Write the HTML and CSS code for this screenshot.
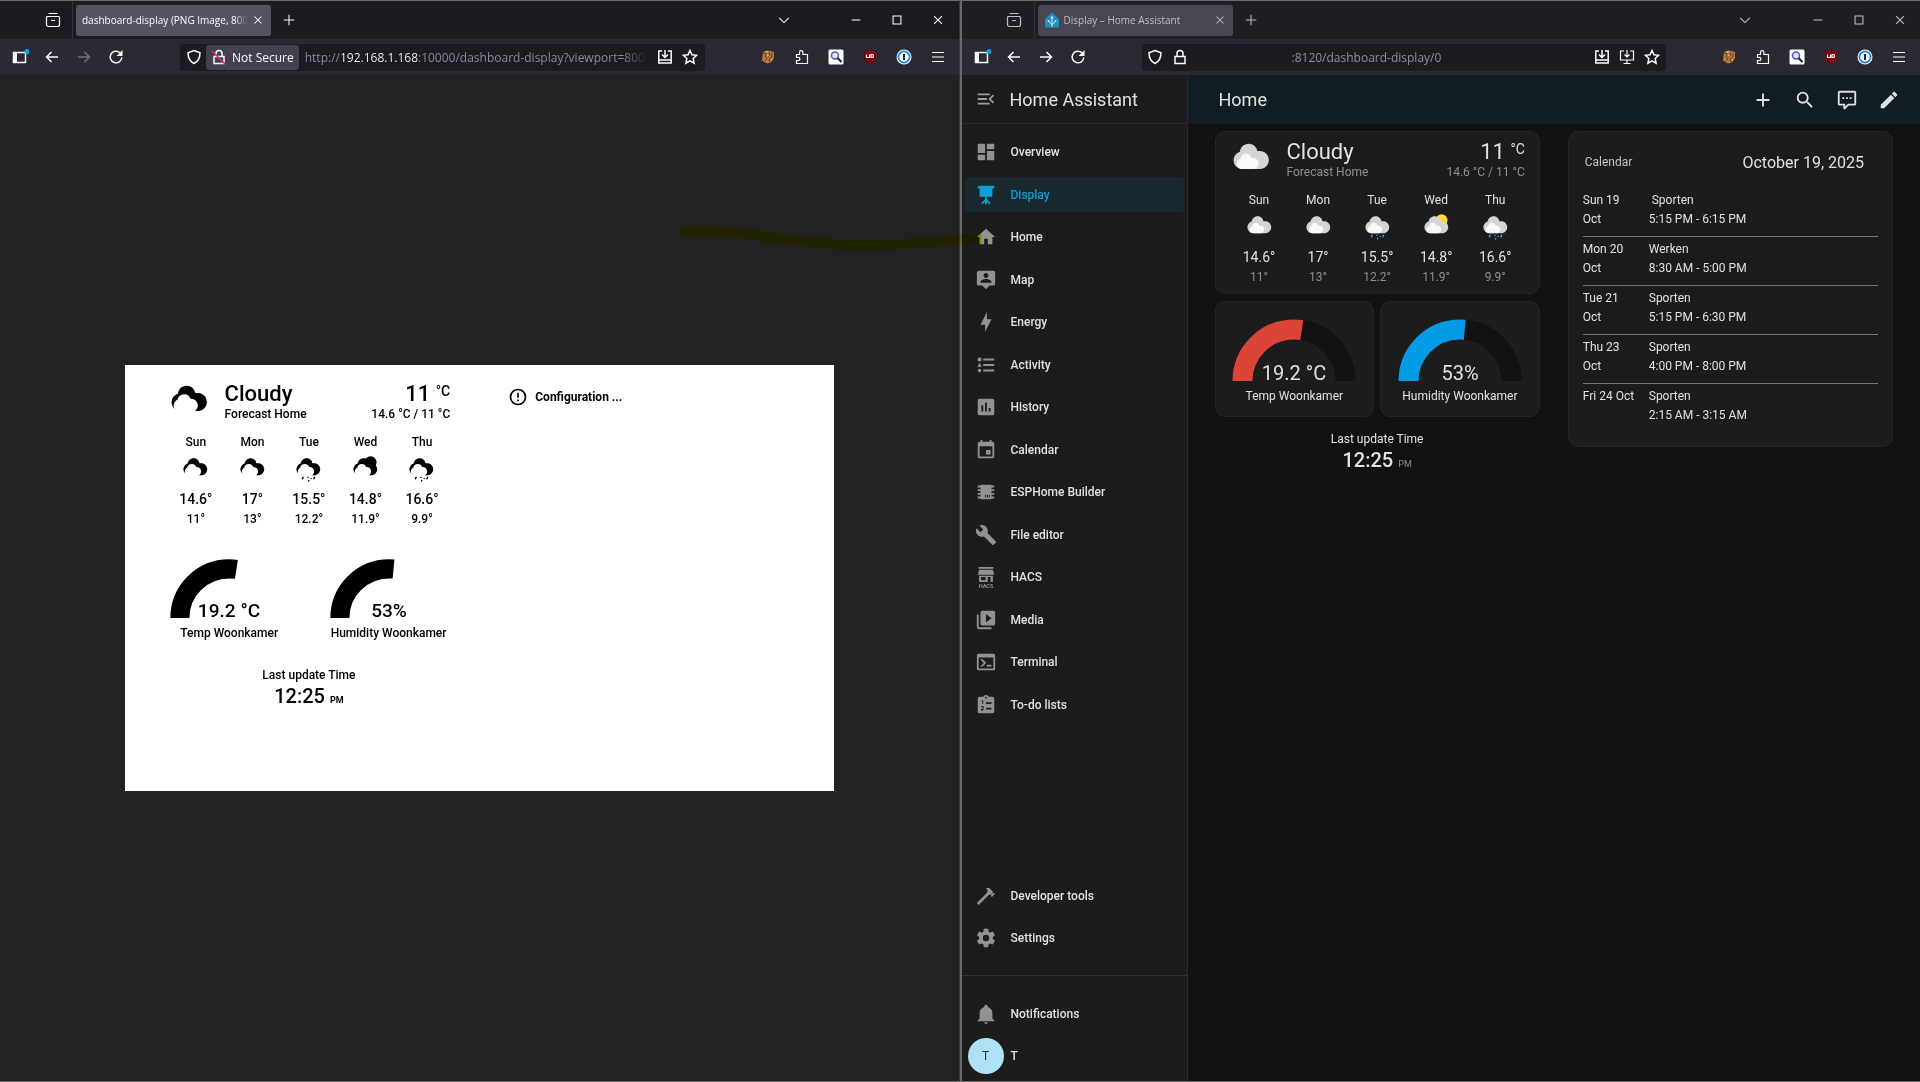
FILE: index.html
```html
<!DOCTYPE html>
<html lang="en">
<head>
    <meta charset="UTF-8">
    <meta name="viewport" content="width=device-width, initial-scale=1.0">
    <title>Display – Home Assistant</title>
    <link rel="stylesheet" href="styles.css">
</head>
<body>
    <!-- Icon sprite -->
    <svg class="sprite" aria-hidden="true">
        <symbol id="i-view" viewBox="0 0 16 16"><path d="M3.5 1.5h9M2.5 4.5h11a1 1 0 0 1 1 1v7a2 2 0 0 1-2 2h-9a2 2 0 0 1-2-2v-7a1 1 0 0 1 1-1zM6 8.5h4" class="line"/></symbol>
        <symbol id="i-close" viewBox="0 0 16 16"><path d="M4 4l8 8M12 4l-8 8" class="line"/></symbol>
        <symbol id="i-plus" viewBox="0 0 16 16"><path d="M8 2v12M2 8h12" class="line"/></symbol>
        <symbol id="i-down" viewBox="0 0 16 16"><path d="M2.5 5.5L8 11l5.5-5.5" class="line"/></symbol>
        <symbol id="i-min" viewBox="0 0 16 16"><path d="M3 8h10" class="line"/></symbol>
        <symbol id="i-max" viewBox="0 0 16 16"><path d="M3.5 3.5h9v9h-9z" class="line"/></symbol>
        <symbol id="i-quit" viewBox="0 0 16 16"><path d="M3.5 3.5l9 9M12.500 3.500l-9 9" class="line"/></symbol>
        <symbol id="i-sidebar" viewBox="0 0 18 16"><path d="M2.500 3.500h12v10h-12z" class="line thick"/><path d="M2 3h4v11H2z"/><circle cx="16" cy="2.500" r="2.500" fill="#00a5e8"/></symbol>
        <symbol id="i-back" viewBox="0 0 16 16"><path d="M14 8H2.500M7.500 3l-5 5 5 5" class="line thick"/></symbol>
        <symbol id="i-forward" viewBox="0 0 16 16"><path d="M2 8h11.500M8.500 3l5 5-5 5" class="line thick"/></symbol>
        <symbol id="i-reload" viewBox="0 0 16 16"><path d="M13.800 8.500A5.800 5.800 0 1 1 11.800 3.600" class="line thick"/><path d="M14.500 1v6h-6z"/></symbol>
        <symbol id="i-shield" viewBox="0 0 16 16"><path d="M8 1.500l6 2.200c0 5-1.500 8.500-6 10.800-4.500-2.300-6-5.800-6-10.800z" class="line thick"/></symbol>
        <symbol id="i-lock" viewBox="0 0 16 16"><path d="M3 7.500h10v7H3zM5 7V4.500a3 3 0 0 1 6 0V7" class="line thick"/></symbol>
        <symbol id="i-save" viewBox="0 0 16 16"><path d="M5 2H1.800v12h12.400V2H11M2 11h12" class="line thick"/><path d="M8 1v7M5 5.500l3 3 3-3" class="line thick"/></symbol>
        <symbol id="i-install" viewBox="0 0 16 16"><path d="M5 2H1.500v9h13V2H11M8 11v3.500M4.500 14.500h7M8 1v7M5.500 5.500L8 8l2.500-2.500" class="line"/></symbol>
        <symbol id="i-star" viewBox="0 0 16 16"><path d="M8 1.500l2 4.300 4.600.5-3.400 3.200.9 4.700L8 11.900l-4.100 2.300.9-4.700L1.400 6.300l4.600-.5z" class="line thick"/></symbol>
        <symbol id="i-cookie" viewBox="0 0 16 16"><path d="M3 3l5-1.500 6 1.500v6l-3 4.500-4 1L2 11.500z" fill="#b9793f"/><path d="M3 4l3 .5-1 2.500 2 3-2 2M9 3l1 3-2 2M12 4v4l-3 2 1 3" fill="none" stroke="#6e3c1c"/><path d="M5 3l3-.5M7 6l2 1M11 10l1 1" stroke="#efc08c" fill="none"/></symbol>
        <symbol id="i-puzzle" viewBox="0 0 16 16"><path d="M2.500 5.500h3V3.300a1.700 1.700 0 0 1 3.400 0v2.200h4.600v9h-11v-3h1.800a1.500 1.500 0 0 0 0-3.200H2.500z" class="line"/></symbol>
        <symbol id="i-search-ext" viewBox="0 0 16 16"><rect x=".5" y=".5" width="15" height="15" rx="1.500" fill="#fff"/><circle cx="7" cy="6.500" r="3.500" fill="#e4e4ff" stroke="#5650c8" stroke-width="1.500"/><path d="M9.500 9l4 4" stroke="#1e1e50" stroke-width="2.200"/></symbol>
        <symbol id="i-ublock" viewBox="0 0 16 16"><path d="M8 .5C6 2 4 2.500 1.500 2.500c0 6 1 10 6.500 13 5.500-3 6.500-7 6.500-13C12 2.500 10 2 8 .5z" fill="#7d0010"/><path d="M4.500 5.500v3h3v-3M9 9V5.500h1.500a1.600 1.600 0 0 1 0 3H9" fill="none" stroke="#fff" stroke-width="1.200"/></symbol>
        <symbol id="i-onepass" viewBox="0 0 16 16"><circle cx="8" cy="8" r="7.500" fill="#fff"/><circle cx="8" cy="8" r="5.600" fill="#fff" stroke="#1a7fe6" stroke-width="1.700"/><path d="M8 5v6" stroke="#142a4a" stroke-width="2"/></symbol>
        <symbol id="i-menu" viewBox="0 0 16 16"><path d="M2 3.500h12M2 8h12M2 12.500h12" class="line"/></symbol>
        <symbol id="i-hass" viewBox="0 0 16 16"><path d="M8 .5L15 7v7.500a1 1 0 0 1-1 1H2a1 1 0 0 1-1-1V7z" fill="#1e8fbd"/><path d="M8 15V6M8 12L4.500 9.500M8 13l3.500-3.500" stroke="#d6eef8" fill="none"/><circle cx="8" cy="5.500" r="1.200" fill="#d6eef8"/><circle cx="4.500" cy="9" r="1" fill="#d6eef8"/><circle cx="11.500" cy="9" r="1" fill="#d6eef8"/></symbol>

        <symbol id="m-open" viewBox="0 0 24 24"><path d="M21,15.61L19.59,17L14.58,12L19.59,7L21,8.39L17.44,12L21,15.61M3,6H16V8H3V6M3,13V11H13V13H3M3,18V16H16V18H3Z"/></symbol>
        <symbol id="m-dashboard" viewBox="0 0 24 24"><path d="M13,3V9H21V3M13,21H21V11H13M3,21H11V15H3M3,13H11V3H3V13Z"/></symbol>
        <symbol id="m-screen" viewBox="0 0 24 24"><path d="M4,2A1,1 0 0,0 3,3V4A1,1 0 0,0 4,5H5V14H11V16.590L6.790,20.790L8.210,22.210L11,19.410V22H13V19.410L15.790,22.210L17.210,20.790L13,16.590V14H19V5H20A1,1 0 0,0 21,4V3A1,1 0 0,0 20,2H4Z"/></symbol>
        <symbol id="m-home" viewBox="0 0 24 24"><path d="M10,20V14H14V20H19V12H22L12,3L2,12H5V20H10Z"/></symbol>
        <symbol id="m-map" viewBox="0 0 24 24"><path fill-rule="evenodd" d="M20,2H4A2,2 0 0,0 2,4V16A2,2 0 0,0 4,18H8L12,22L16,18H20A2,2 0 0,0 22,16V4A2,2 0 0,0 20,2M12,4.300C13.500,4.300 14.700,5.500 14.700,7C14.700,8.500 13.500,9.700 12,9.700C10.500,9.700 9.300,8.500 9.300,7C9.300,5.500 10.500,4.300 12,4.300M18,15H6V14.100C6,12.100 10,11 12,11C14,11 18,12.100 18,14.100V15Z"/></symbol>
        <symbol id="m-bolt" viewBox="0 0 24 24"><path d="M11 15H6L13 1V9H18L11 23V15Z"/></symbol>
        <symbol id="m-list" viewBox="0 0 24 24"><path d="M5,9.500L7.500,14H2.500L5,9.500M3,4H7V8H3V4M5,20A2,2 0 0,0 7,18A2,2 0 0,0 5,16A2,2 0 0,0 3,18A2,2 0 0,0 5,20M9,5V7H21V5H9M9,19H21V17H9V19M9,13H21V11H9V13Z"/></symbol>
        <symbol id="m-chart" viewBox="0 0 24 24"><path fill-rule="evenodd" d="M9 17H7V10H9V17M13 17H11V7H13V17M17 17H15V13H17V17M19 3H5C3.890 3 3 3.890 3 5V19C3 20.100 3.890 21 5 21H19C20.100 21 21 20.100 21 19V5C21 3.890 20.100 3 19 3Z"/></symbol>
        <symbol id="m-calendar" viewBox="0 0 24 24"><path fill-rule="evenodd" d="M19,19H5V8H19M16,1V3H8V1H6V3H5C3.890,3 3,3.890 3,5V19A2,2 0 0,0 5,21H19A2,2 0 0,0 21,19V5C21,3.890 20.100,3 19,3H18V1M17,12H12V17H17V12Z"/></symbol>
        <symbol id="m-chip" viewBox="0 0 24 24"><path fill-rule="evenodd" d="M6,4H18V5H21V7H18V9H21V11H18V13H21V15H18V17H21V19H18V20H6V19H3V17H6V15H3V13H6V11H3V9H6V7H3V5H6V4M11,15V18H12V15H11M13,15V18H14V15H13M15,15V18H16V15H15Z"/></symbol>
        <symbol id="m-wrench" viewBox="0 0 24 24"><path d="M22.700,19L13.600,9.900C14.500,7.600 14,4.900 12.100,3C10.100,1 7.100,0.600 4.700,1.700L9,6L6,9L1.600,4.700C0.400,7.100 0.900,10.100 2.900,12.100C4.800,14 7.500,14.500 9.800,13.600L18.900,22.700C19.300,23.100 19.900,23.100 20.300,22.700L22.600,20.400C23.100,20 23.100,19.300 22.700,19Z"/></symbol>
        <symbol id="m-hacs" viewBox="0 0 24 24"><path fill-rule="evenodd" d="M4 1h16v2H4zM4.500 4h15L21 9.500H3zM4.500 10.500h15v7h-15zM6.500 12v3.500h5V12zM14 12v5.500h3V12z"/><text x="12" y="23.500" text-anchor="middle" class="hacs-text">HACS</text></symbol>
        <symbol id="m-media" viewBox="0 0 24 24"><path fill-rule="evenodd" d="M4,6H2V20A2,2 0 0,0 4,22H18V20H4V6M20,2H8A2,2 0 0,0 6,4V16A2,2 0 0,0 8,18H20A2,2 0 0,0 22,16V4A2,2 0 0,0 20,2M12,14.500V5.500L18,10L12,14.500Z"/></symbol>
        <symbol id="m-console" viewBox="0 0 24 24"><path fill-rule="evenodd" d="M20,19V7H4V19H20M20,3A2,2 0 0,1 22,5V19A2,2 0 0,1 20,21H4A2,2 0 0,1 2,19V5C2,3.890 2.900,3 4,3H20M13,17V15H18V17H13M9.580,13L5.570,9H8.400L11.700,12.300C12.090,12.690 12.090,13.330 11.700,13.720L8.420,17H5.590L9.580,13Z"/></symbol>
        <symbol id="m-todo" viewBox="0 0 24 24"><path fill-rule="evenodd" d="M19,3H14.820C14.250,1.440 12.530,0.640 11,1.200C10.140,1.500 9.500,2.160 9.180,3H5A2,2 0 0,0 3,5V19A2,2 0 0,0 5,21H19A2,2 0 0,0 21,19V5A2,2 0 0,0 19,3M12,3A1,1 0 0,1 13,4A1,1 0 0,1 12,5A1,1 0 0,1 11,4A1,1 0 0,1 12,3M7 7h2v4H8V8H7zM6.500 13h3v2.500l-1.500 1.500h1.500v1h-3v-1l2-2v-1h-2zM12 9h6v2h-6zM12 15h6v2h-6z"/></symbol>
        <symbol id="m-hammer" viewBox="0 0 24 24"><path d="M2,19.630L13.430,8.200L12.720,7.500L14.140,6.070L12,3.890C13.200,2.700 15.090,2.700 16.270,3.890L19.870,7.500L18.450,8.910H21.290L22,9.620L18.450,13.210L17.740,12.500V9.620L16.270,11.040L15.560,10.330L4.130,21.760L2,19.630Z"/></symbol>
        <symbol id="m-cog" viewBox="0 0 24 24"><path d="M12,15.500A3.500,3.500 0 0,1 8.500,12A3.500,3.500 0 0,1 12,8.500A3.500,3.500 0 0,1 15.500,12A3.500,3.500 0 0,1 12,15.500M19.430,12.970C19.470,12.650 19.500,12.330 19.500,12C19.500,11.670 19.470,11.340 19.430,11L21.540,9.370C21.730,9.220 21.780,8.950 21.660,8.730L19.660,5.270C19.540,5.050 19.270,4.960 19.050,5.050L16.560,6.050C16.040,5.660 15.500,5.320 14.870,5.070L14.500,2.420C14.460,2.180 14.250,2 14,2H10C9.750,2 9.540,2.180 9.500,2.420L9.130,5.070C8.500,5.320 7.960,5.660 7.440,6.050L4.950,5.050C4.730,4.960 4.460,5.050 4.340,5.270L2.340,8.730C2.210,8.950 2.270,9.220 2.460,9.370L4.570,11C4.530,11.340 4.500,11.670 4.500,12C4.500,12.330 4.530,12.650 4.570,12.970L2.460,14.630C2.270,14.780 2.210,15.050 2.340,15.270L4.340,18.730C4.460,18.950 4.730,19.030 4.950,18.950L7.440,17.940C7.960,18.340 8.500,18.680 9.130,18.930L9.500,21.580C9.540,21.820 9.750,22 10,22H14C14.250,22 14.460,21.820 14.500,21.580L14.870,18.930C15.500,18.670 16.040,18.340 16.560,17.940L19.050,18.950C19.270,19.030 19.540,18.950 19.660,18.730L21.660,15.270C21.780,15.050 21.730,14.780 21.540,14.630L19.430,12.970Z"/></symbol>
        <symbol id="m-bell" viewBox="0 0 24 24"><path d="M21,19V20H3V19L5,17V11C5,7.900 7.030,5.170 10,4.290C10,4.190 10,4.100 10,4A2,2 0 0,1 12,2A2,2 0 0,1 14,4C14,4.100 14,4.190 14,4.290C16.970,5.170 19,7.900 19,11V17L21,19M14,21A2,2 0 0,1 12,23A2,2 0 0,1 10,21"/></symbol>
        <symbol id="m-plus" viewBox="0 0 24 24"><path d="M19,13H13V19H11V13H5V11H11V5H13V11H19V13Z"/></symbol>
        <symbol id="m-search" viewBox="0 0 24 24"><path d="M9.500,3A6.500,6.500 0 0,1 16,9.500C16,11.110 15.410,12.590 14.440,13.730L14.710,14H15.500L20.500,19L19,20.500L14,15.500V14.710L13.730,14.440C12.590,15.410 11.110,16 9.500,16A6.500,6.500 0 0,1 3,9.500A6.500,6.500 0 0,1 9.500,3M9.500,5C7,5 5,7 5,9.500C5,12 7,14 9.500,14C12,14 14,12 14,9.500C14,7 12,5 9.500,5Z"/></symbol>
        <symbol id="m-chat" viewBox="0 0 24 24"><path fill-rule="evenodd" d="M9,22A1,1 0 0,1 8,21V18H4A2,2 0 0,1 2,16V4C2,2.890 2.900,2 4,2H20A2,2 0 0,1 22,4V16A2,2 0 0,1 20,18H13.900L10.200,21.710C10,21.900 9.750,22 9.500,22H9M10,16V19.080L13.080,16H20V4H4V16H10M17,11H15V9H17V11M13,11H11V9H13V11M9,11H7V9H9V11Z"/></symbol>
        <symbol id="m-pencil" viewBox="0 0 24 24"><path d="M20.710,7.040C21.100,6.650 21.100,6 20.710,5.630L18.370,3.290C18,2.900 17.350,2.900 16.960,3.290L15.120,5.120L18.870,8.870M3,17.250V21H6.750L17.810,9.930L14.060,6.180L3,17.250Z"/></symbol>
        <symbol id="m-alert" viewBox="0 0 24 24"><path d="M11,15H13V17H11V15M11,7H13V13H11V7M12,2C6.470,2 2,6.500 2,12A10,10 0 0,0 12,22A10,10 0 0,0 22,12A10,10 0 0,0 12,2M12,20A8,8 0 0,1 4,12A8,8 0 0,1 12,4A8,8 0 0,1 20,12A8,8 0 0,1 12,20Z"/></symbol>

        <!-- Weather -->
        <symbol id="w-cloudy" viewBox="0 0 17 17">
            <path class="cloud-back" d="m3.886 5.035c-0.549 0.169-1.040 0.466-1.437 0.864-0.631 0.630-1.021 1.493-1.021 2.455 0 1.925 1.559 3.468 3.484 3.468h6.969c1.925 0 3.484-1.598 3.484-3.523 0-1.925-1.559-3.523-3.484-3.523h-1.083c-0.253-1.692-1.699-2.908-3.446-2.908-1.800 0-3.281 1.415-3.465 3.168"/>
            <path class="cloud-front" d="m4.200 7.700c-0.339 0.104-0.643 0.288-0.888 0.533-0.390 0.390-0.631 0.923-0.631 1.518 0 1.190 0.964 2.143 2.154 2.143h4.307c1.190 0 2.153-0.987 2.153-2.178 0-1.190-0.963-2.178-2.153-2.178h-0.670c-0.156-1.045-1.050-1.797-2.130-1.797-1.112 0-2.027 0.875-2.142 1.959"/>
        </symbol>
        <symbol id="w-rainy" viewBox="0 0 17 17">
            <use href="#w-cloudy"/>
            <path class="rain" d="M5.500 12.800l-.7 1.400M8.300 12.800l-.3.600M8.800 14.600l-.4.900M10.200 13.500l-.3.600M12.200 12.800l-.7 1.400"/>
        </symbol>
        <symbol id="w-partly" viewBox="0 0 17 17">
            <circle class="sun" cx="11.500" cy="4.200" r="3.480"/>
            <use href="#w-cloudy"/>
        </symbol>
    </svg>

    <!-- Left window -->
    <section class="window">
        <div class="tab-bar">
            <button class="tb-btn view-btn" aria-label="Firefox View"><svg><use href="#i-view"/></svg></button>
            <div class="tab active">
                <span class="tab-title">dashboard-display (PNG Image, 800 × 480 pixels)</span>
                <button class="tab-close" aria-label="Close tab"><svg><use href="#i-close"/></svg></button>
            </div>
            <button class="tb-btn new-tab" aria-label="New tab"><svg><use href="#i-plus"/></svg></button>
            <button class="tb-btn all-tabs" aria-label="List all tabs"><svg><use href="#i-down"/></svg></button>
            <button class="win-btn" aria-label="Minimize"><svg><use href="#i-min"/></svg></button>
            <button class="win-btn" aria-label="Maximize"><svg><use href="#i-max"/></svg></button>
            <button class="win-btn" aria-label="Close"><svg><use href="#i-quit"/></svg></button>
        </div>
        <div class="nav-bar">
            <button class="nav-btn" aria-label="Sidebar"><svg class="wide"><use href="#i-sidebar"/></svg></button>
            <button class="nav-btn" aria-label="Back"><svg><use href="#i-back"/></svg></button>
            <button class="nav-btn" aria-label="Forward" disabled><svg><use href="#i-forward"/></svg></button>
            <button class="nav-btn" aria-label="Reload"><svg><use href="#i-reload"/></svg></button>
            <div class="url-bar">
                <button class="url-btn" aria-label="Tracking protection"><svg><use href="#i-shield"/></svg></button>
                <button class="not-secure">
                    <svg viewBox="0 0 16 16"><use href="#i-lock"/><path d="M1 2l13 13" class="slash"/></svg>
                    Not Secure
                </button>
                <input class="url-input host" type="text" aria-label="Address" value="http://192.168.1.168:10000/dashboard-display?viewport=800x480">
                <button class="url-btn" aria-label="Save"><svg><use href="#i-save"/></svg></button>
                <button class="url-btn" aria-label="Bookmark"><svg><use href="#i-star"/></svg></button>
            </div>
            <button class="ext-btn" aria-label="Cookies"><svg><use href="#i-cookie"/></svg></button>
            <button class="ext-btn" aria-label="Extensions"><svg><use href="#i-puzzle"/></svg></button>
            <button class="ext-btn" aria-label="Image search"><svg><use href="#i-search-ext"/></svg></button>
            <button class="ext-btn" aria-label="Ad blocker"><svg><use href="#i-ublock"/></svg></button>
            <button class="ext-btn" aria-label="Passwords"><svg><use href="#i-onepass"/></svg></button>
            <button class="ext-btn" aria-label="Menu"><svg><use href="#i-menu"/></svg></button>
        </div>
        <div class="image-viewer">
            <div class="paper dashboard">
                <div class="column">
                    <div class="card weather">
                        <div class="weather-head">
                            <svg class="weather-icon"><use href="#w-cloudy"/></svg>
                            <div class="weather-info">
                                <div class="state">Cloudy</div>
                                <div class="sub">Forecast Home</div>
                            </div>
                            <div class="weather-temp">
                                <div class="state">11 <sup>°C</sup></div>
                                <div class="sub">14.6 °C / 11 °C</div>
                            </div>
                        </div>
                        <ul class="forecast">
                            <li><span>Sun</span><svg><use href="#w-cloudy"/></svg><b>14.6°</b><small>11°</small></li>
                            <li><span>Mon</span><svg><use href="#w-cloudy"/></svg><b>17°</b><small>13°</small></li>
                            <li><span>Tue</span><svg><use href="#w-rainy"/></svg><b>15.5°</b><small>12.2°</small></li>
                            <li><span>Wed</span><svg><use href="#w-partly"/></svg><b>14.8°</b><small>11.9°</small></li>
                            <li><span>Thu</span><svg><use href="#w-rainy"/></svg><b>16.6°</b><small>9.9°</small></li>
                        </ul>
                    </div>
                    <div class="gauges">
                        <div class="card gauge">
                            <svg viewBox="0 0 130 66">
                                <path class="dial" d="M13.500 65a51.500 51.500 0 0 1 103 0"/>
                                <path class="value red" pathLength="100" stroke-dasharray="54.860 100" d="M13.500 65a51.500 51.500 0 0 1 103 0"/>
                                <text x="65" y="64">19.2 °C</text>
                            </svg>
                            <div class="gauge-name">Temp Woonkamer</div>
                        </div>
                        <div class="card gauge">
                            <svg viewBox="0 0 130 66">
                                <path class="dial" d="M13.500 65a51.500 51.500 0 0 1 103 0"/>
                                <path class="value blue" pathLength="100" stroke-dasharray="53 100" d="M13.500 65a51.500 51.500 0 0 1 103 0"/>
                                <text x="65" y="64">53%</text>
                            </svg>
                            <div class="gauge-name">Humidity Woonkamer</div>
                        </div>
                    </div>
                    <div class="clock">
                        <div class="clock-name">Last update Time</div>
                        <div class="clock-time">12:25 <small>PM</small></div>
                    </div>
                </div>
                <div class="column">
                    <div class="error-card">
                        <svg><use href="#m-alert"/></svg>
                        <span>Configuration ...</span>
                    </div>
                </div>
            </div>
        </div>
    </section>

    <!-- Right window -->
    <section class="window inactive">
        <div class="tab-bar">
            <button class="tb-btn view-btn" aria-label="Firefox View"><svg><use href="#i-view"/></svg></button>
            <div class="tab active">
                <svg class="favicon"><use href="#i-hass"/></svg>
                <span class="tab-title">Display – Home Assistant</span>
                <button class="tab-close" aria-label="Close tab"><svg><use href="#i-close"/></svg></button>
            </div>
            <button class="tb-btn new-tab" aria-label="New tab"><svg><use href="#i-plus"/></svg></button>
            <button class="tb-btn all-tabs" aria-label="List all tabs"><svg><use href="#i-down"/></svg></button>
            <button class="win-btn" aria-label="Minimize"><svg><use href="#i-min"/></svg></button>
            <button class="win-btn" aria-label="Maximize"><svg><use href="#i-max"/></svg></button>
            <button class="win-btn" aria-label="Close"><svg><use href="#i-quit"/></svg></button>
        </div>
        <div class="nav-bar">
            <button class="nav-btn" aria-label="Sidebar"><svg class="wide"><use href="#i-sidebar"/></svg></button>
            <button class="nav-btn" aria-label="Back"><svg><use href="#i-back"/></svg></button>
            <button class="nav-btn" aria-label="Forward"><svg><use href="#i-forward"/></svg></button>
            <button class="nav-btn" aria-label="Reload"><svg><use href="#i-reload"/></svg></button>
            <div class="url-bar">
                <button class="url-btn" aria-label="Tracking protection"><svg><use href="#i-shield"/></svg></button>
                <button class="url-btn" aria-label="Connection secure"><svg><use href="#i-lock"/></svg></button>
                <input class="url-input indent" type="text" aria-label="Address" value=":8120/dashboard-display/0">
                <button class="url-btn" aria-label="Save"><svg><use href="#i-save"/></svg></button>
                <button class="url-btn" aria-label="Install"><svg><use href="#i-install"/></svg></button>
                <button class="url-btn" aria-label="Bookmark"><svg><use href="#i-star"/></svg></button>
            </div>
            <button class="ext-btn" aria-label="Cookies"><svg><use href="#i-cookie"/></svg></button>
            <button class="ext-btn" aria-label="Extensions"><svg><use href="#i-puzzle"/></svg></button>
            <button class="ext-btn" aria-label="Image search"><svg><use href="#i-search-ext"/></svg></button>
            <button class="ext-btn" aria-label="Ad blocker"><svg><use href="#i-ublock"/></svg></button>
            <button class="ext-btn" aria-label="Passwords"><svg><use href="#i-onepass"/></svg></button>
            <button class="ext-btn" aria-label="Menu"><svg><use href="#i-menu"/></svg></button>
        </div>
        <div class="app">
            <aside class="sidebar">
                <div class="sidebar-head">
                    <button aria-label="Toggle sidebar"><svg><use href="#m-open"/></svg></button>
                    <span>Home Assistant</span>
                </div>
                <nav class="menu menu-main">
                    <a href="#"><svg><use href="#m-dashboard"/></svg>Overview</a>
                    <a href="#" class="selected"><svg><use href="#m-screen"/></svg>Display</a>
                    <a href="#"><svg><use href="#m-home"/></svg>Home</a>
                    <a href="#"><svg><use href="#m-map"/></svg>Map</a>
                    <a href="#"><svg><use href="#m-bolt"/></svg>Energy</a>
                    <a href="#"><svg><use href="#m-list"/></svg>Activity</a>
                    <a href="#"><svg><use href="#m-chart"/></svg>History</a>
                    <a href="#"><svg><use href="#m-calendar"/></svg>Calendar</a>
                    <a href="#"><svg><use href="#m-chip"/></svg>ESPHome Builder</a>
                    <a href="#"><svg><use href="#m-wrench"/></svg>File editor</a>
                    <a href="#"><svg><use href="#m-hacs"/></svg>HACS</a>
                    <a href="#"><svg><use href="#m-media"/></svg>Media</a>
                    <a href="#"><svg><use href="#m-console"/></svg>Terminal</a>
                    <a href="#"><svg><use href="#m-todo"/></svg>To-do lists</a>
                </nav>
                <nav class="menu menu-tools">
                    <a href="#"><svg><use href="#m-hammer"/></svg>Developer tools</a>
                    <a href="#"><svg><use href="#m-cog"/></svg>Settings</a>
                </nav>
                <nav class="menu menu-user">
                    <a href="#"><svg><use href="#m-bell"/></svg>Notifications</a>
                    <a href="#" class="user"><span class="avatar">T</span>T</a>
                </nav>
            </aside>
            <main class="main">
                <header class="main-head">
                    <h1>Home</h1>
                    <button aria-label="Add"><svg><use href="#m-plus"/></svg></button>
                    <button aria-label="Search"><svg><use href="#m-search"/></svg></button>
                    <button aria-label="Assist"><svg><use href="#m-chat"/></svg></button>
                    <button aria-label="Edit dashboard"><svg><use href="#m-pencil"/></svg></button>
                </header>
                <div class="dashboard">
                    <div class="column">
                        <div class="card weather">
                            <div class="weather-head">
                                <svg class="weather-icon"><use href="#w-cloudy"/></svg>
                                <div class="weather-info">
                                    <div class="state">Cloudy</div>
                                    <div class="sub">Forecast Home</div>
                                </div>
                                <div class="weather-temp">
                                    <div class="state">11 <sup>°C</sup></div>
                                    <div class="sub">14.6 °C / 11 °C</div>
                                </div>
                            </div>
                            <ul class="forecast">
                                <li><span>Sun</span><svg><use href="#w-cloudy"/></svg><b>14.6°</b><small>11°</small></li>
                                <li><span>Mon</span><svg><use href="#w-cloudy"/></svg><b>17°</b><small>13°</small></li>
                                <li><span>Tue</span><svg><use href="#w-rainy"/></svg><b>15.5°</b><small>12.2°</small></li>
                                <li><span>Wed</span><svg><use href="#w-partly"/></svg><b>14.8°</b><small>11.9°</small></li>
                                <li><span>Thu</span><svg><use href="#w-rainy"/></svg><b>16.6°</b><small>9.9°</small></li>
                            </ul>
                        </div>
                        <div class="gauges">
                            <div class="card gauge">
                                <svg viewBox="0 0 130 66">
                                    <path class="dial" d="M13.500 65a51.500 51.500 0 0 1 103 0"/>
                                    <path class="value red" pathLength="100" stroke-dasharray="54.860 100" d="M13.500 65a51.500 51.500 0 0 1 103 0"/>
                                    <text x="65" y="64">19.2 °C</text>
                                </svg>
                                <div class="gauge-name">Temp Woonkamer</div>
                            </div>
                            <div class="card gauge">
                                <svg viewBox="0 0 130 66">
                                    <path class="dial" d="M13.500 65a51.500 51.500 0 0 1 103 0"/>
                                    <path class="value blue" pathLength="100" stroke-dasharray="53 100" d="M13.500 65a51.500 51.500 0 0 1 103 0"/>
                                    <text x="65" y="64">53%</text>
                                </svg>
                                <div class="gauge-name">Humidity Woonkamer</div>
                            </div>
                        </div>
                        <div class="clock">
                            <div class="clock-name">Last update Time</div>
                            <div class="clock-time">12:25 <small>PM</small></div>
                        </div>
                    </div>
                    <div class="column">
                        <div class="card calendar">
                            <div class="calendar-head">
                                <span>Calendar</span>
                                <strong>October 19, 2025</strong>
                            </div>
                            <table>
                                <tbody>
                                    <tr><th scope="row">Sun 19<br>Oct</th><td>&nbsp;Sporten<br>5:15 PM - 6:15 PM</td></tr>
                                    <tr><th scope="row">Mon 20<br>Oct</th><td>Werken<br>8:30 AM - 5:00 PM</td></tr>
                                    <tr><th scope="row">Tue 21<br>Oct</th><td>Sporten<br>5:15 PM - 6:30 PM</td></tr>
                                    <tr><th scope="row">Thu 23<br>Oct</th><td>Sporten<br>4:00 PM - 8:00 PM</td></tr>
                                    <tr><th scope="row">Fri 24 Oct</th><td>Sporten<br>2:15 AM - 3:15 AM</td></tr>
                                </tbody>
                            </table>
                        </div>
                    </div>
                </div>
            </main>
        </div>
    </section>

    <!-- Highlighter stroke across both windows -->
    <svg class="marker" viewBox="0 0 304 34" aria-hidden="true"><path d="M0 9C70 6 110 24 190 23S260 16 302 17"/></svg>
</body>
</html>
```
FILE: styles.css
```css
* {
    box-sizing: border-box;
}

body {
    --cloud-back: #d4d4d4;
    --cloud-front: #f9f9f9;
    --cloud-edge: none;
    --sun: #fdd93c;
    --rain: #30b3ff;
    margin: 0;
    min-height: 100vh;
    display: flex;
    position: relative;
    background-color: #111;
    color: #e1e1e1;
    font-family: Roboto, "Liberation Sans", sans-serif;
    font-size: 12px;
}

button {
    display: flex;
    align-items: center;
    justify-content: center;
    padding: 0;
    border: none;
    background: none;
    color: inherit;
    font: inherit;
}

svg {
    display: block;
    fill: currentColor;
}

.sprite {
    position: absolute;
    width: 0;
    height: 0;
}

.line {
    fill: none;
    stroke: currentColor;
    stroke-width: 1.2;
}

.thick {
    stroke-width: 1.5;
}

/* Browser windows */
.window {
    flex: 1;
    min-width: 0;
    display: flex;
    flex-direction: column;
    border: 1px solid #6a6a6d;
    border-left: none;
    border-right-color: #3a3a3d;
}

.window.inactive {
    border-left: 2px solid #6a6a6d;
    border-right: none;
}

.tab-bar, .nav-bar {
    display: flex;
    align-items: center;
    font-family: "Open Sans", "Noto Sans", sans-serif;
    font-size: 10px;
    color: #fbfbfe;
}

.tab-bar {
    height: 38px;
    background-color: #1c1b22;
}

.inactive .tab-bar {
    background-color: #1f1e25;
    color: #bfbfc9;
}

.tb-btn, .win-btn {
    height: 36px;
}

.tb-btn {
    width: 36px;
}

.tb-btn svg, .win-btn svg {
    width: 14px;
    height: 14px;
}

.view-btn {
    width: 40px;
    height: 38px;
    margin-left: 33px;
    border-right: 1px solid #33323b;
}

.view-btn svg {
    width: 16px;
    height: 16px;
}

.tab {
    width: 195px;
    height: 31px;
    margin-left: 3px;
    padding: 0 6px;
    display: flex;
    align-items: center;
    gap: 4px;
    border-radius: 3px;
    background-color: #55535f;
}

.inactive .tab {
    background-color: #474651;
}

.favicon {
    width: 16px;
    height: 16px;
}

.tab-title {
    flex: 1;
    overflow: hidden;
    white-space: nowrap;
    mask-image: linear-gradient(to left, transparent, #000 12px);
}

.inactive .tab-title {
    mask-image: none;
}

.tab-close svg {
    width: 14px;
    height: 14px;
}

.all-tabs {
    margin-left: auto;
    margin-right: 34px;
}

.win-btn {
    width: 41px;
}

.nav-bar {
    height: 36px;
    padding: 0 4px;
    background-color: #2b2a33;
}

.nav-bar svg {
    width: 16px;
    height: 16px;
}

.nav-bar svg.wide {
    width: 18px;
}

.nav-btn {
    width: 32px;
    height: 32px;
}

.nav-btn:disabled {
    opacity: 0.35;
}

.ext-btn {
    width: 34px;
    height: 32px;
}

.url-bar {
    flex: 1;
    min-width: 0;
    height: 27px;
    margin: 0 46px 0 48px;
    padding: 0 2px 0 1px;
    display: flex;
    align-items: center;
    border-radius: 3px;
    background-color: #1c1b22;
}

.url-btn {
    width: 25px;
    height: 25px;
    flex-shrink: 0;
}

.not-secure {
    flex-shrink: 0;
    height: 25px;
    padding: 0 5px;
    gap: 5px;
    border-radius: 3px;
    background-color: #42414d;
    font-size: 12px;
}

.slash {
    stroke: #e22850;
    stroke-width: 1.5;
}

.url-input {
    flex: 1;
    min-width: 0;
    margin: 0 6px;
    padding: 0;
    border: none;
    outline: none;
    background: none;
    color: #8f8f9b;
    font: inherit;
    font-size: 12px;
}

/* Host part is brighter than the rest of the address */
.url-input.host {
    background-image: linear-gradient(to right, #8f8f9b 37px, #fbfbfe 37px 113px, #8f8f9b 113px calc(100% - 24px), transparent);
    background-clip: text;
    -webkit-background-clip: text;
    -webkit-text-fill-color: transparent;
}

.url-input.indent {
    margin-left: 99px;
}

/* Image viewer */
.image-viewer {
    flex: 1;
    display: flex;
    align-items: center;
    justify-content: center;
    background-color: #222;
}

.dashboard {
    display: grid;
    grid-template-columns: 1fr 1fr;
    gap: 28px;
    padding: 7px 27px;
}

/* Home Assistant */
.app {
    flex: 1;
    display: flex;
}

.sidebar {
    width: 226px;
    display: flex;
    flex-direction: column;
    border-right: 1px solid #292929;
    background-color: #1c1c1c;
}

.sidebar-head {
    height: 49px;
    padding-left: 13px;
    display: flex;
    align-items: center;
    gap: 13px;
    border-bottom: 1px solid #292929;
    font-size: 18px;
}

.sidebar-head svg {
    width: 22px;
    height: 22px;
    color: #9b9b9b;
}

.menu {
    display: grid;
    align-items: center;
    padding: 0 3px;
}

.menu a {
    height: 35px;
    padding-left: 10px;
    display: flex;
    align-items: center;
    gap: 14px;
    border-radius: 3px;
    color: #e1e1e1;
    font-weight: 500;
    text-decoration: none;
}

.menu svg {
    width: 22px;
    height: 22px;
    color: #929292;
}

.menu .selected, .menu .selected svg {
    color: #0f9fd0;
}

.menu .selected {
    background-color: #1a292f;
}

.hacs-text {
    font-size: 6px;
    font-weight: 700;
}

.menu-main {
    height: 55vh;
    margin-top: 7px;
}

.menu-tools, .menu-user {
    grid-auto-rows: 42px;
}

.menu-tools {
    margin-top: auto;
    padding-bottom: 16px;
}

.menu-user {
    padding-top: 17px;
    padding-bottom: 4px;
    border-top: 1px solid #333;
}

.menu a.user {
    padding-left: 3px;
    gap: 7px;
}

.avatar {
    width: 36px;
    height: 36px;
    border-radius: 50%;
    background-color: #aee0f6;
    color: #1c3440;
    font-weight: 400;
    line-height: 36px;
    text-align: center;
}

.main {
    flex: 1;
    background-color: #111;
}

.main-head {
    height: 49px;
    padding: 0 10px 0 31px;
    display: flex;
    align-items: center;
    background-color: #101e24;
}

.main-head h1 {
    margin: 0 auto 0 0;
    font-size: 18px;
    font-weight: 400;
}

.main-head button {
    width: 42px;
    height: 42px;
}

.main-head svg {
    width: 22px;
    height: 22px;
}

/* Cards */
.column {
    min-width: 0;
}

.card {
    border: 1px solid #242424;
    border-radius: 10px;
    background-color: #1c1c1c;
}

.weather {
    padding: 7px 14px;
}

.weather-head {
    display: flex;
    gap: 14px;
}

.weather-icon {
    width: 43px;
    height: 43px;
}

.weather-temp {
    margin-left: auto;
    text-align: right;
}

.state {
    font-size: 22px;
    line-height: 26px;
}

.state sup {
    font-size: 14px;
    line-height: 1;
    vertical-align: 5px;
}

.sub {
    font-size: 12px;
    line-height: 14px;
}

.sub, .forecast small {
    color: #8f8f8f;
}

.forecast {
    margin: 9px 0 0;
    padding: 0;
    display: grid;
    grid-template-columns: repeat(5, 1fr);
    justify-items: center;
    list-style: none;
}

.forecast li {
    display: flex;
    flex-direction: column;
    align-items: center;
}

.forecast span {
    line-height: 18px;
}

.forecast svg {
    width: 29px;
    height: 29px;
    margin: 4px 0;
}

.forecast b {
    font-size: 14px;
    font-weight: inherit;
    line-height: 22px;
}

.forecast small {
    font-size: 12px;
    line-height: 18px;
}

.cloud-back {
    fill: var(--cloud-back);
}

.cloud-front {
    fill: var(--cloud-front);
    stroke: var(--cloud-edge);
    stroke-width: 1;
}

.sun {
    fill: var(--sun);
}

.rain {
    fill: none;
    stroke: var(--rain);
    stroke-width: 0.8;
}

.gauges {
    display: grid;
    grid-template-columns: 1fr 1fr;
    gap: 6px;
    margin-top: 7px;
}

.gauge {
    height: 116px;
    padding-top: 14px;
    display: flex;
    flex-direction: column;
    align-items: center;
}

.gauge svg {
    width: 130px;
    overflow: visible;
}

.gauge path {
    fill: none;
    stroke-width: 20;
}

.gauge text {
    font-size: 20px;
    text-anchor: middle;
}

.dial {
    stroke: #111;
}

.red {
    stroke: #db4437;
}

.blue {
    stroke: #039be5;
}

.gauge-name {
    margin-top: 5px;
    line-height: 18px;
}

.clock {
    margin-top: 13px;
    text-align: center;
}

.clock-name {
    line-height: 18px;
}

.clock-time {
    font-size: 20px;
    font-weight: 500;
    line-height: 24px;
}

.clock-time small {
    font-size: 9px;
    font-weight: 400;
    color: #8f8f8f;
}

.calendar {
    min-height: 316px;
    padding: 14px;
}

.calendar-head {
    height: 32px;
    padding: 0 14px 0 2px;
    display: flex;
    align-items: center;
    justify-content: space-between;
    margin-bottom: 10px;
}

.calendar-head span {
    color: #c4c4c4;
}

.calendar-head strong {
    font-size: 16px;
    font-weight: 400;
}

.calendar table {
    width: 100%;
    border-collapse: collapse;
    line-height: 19px;
}

.calendar th, .calendar td {
    padding: 3px 0 7px;
    font-weight: 400;
    text-align: left;
    vertical-align: top;
}

.calendar th {
    width: 66px;
}

.calendar tr + tr {
    border-top: 1px solid #777;
}

/* Black and white copy of the dashboard */
.paper {
    --cloud-back: #000;
    --cloud-front: #fff;
    --cloud-edge: #fff;
    --sun: #000;
    --rain: #000;
    width: 74%;
    aspect-ratio: 5 / 3;
    padding: 8px 28px;
    background-color: #fff;
    color: #000;
    font-weight: 500;
}

.paper .card {
    border-color: transparent;
    background: none;
}

.paper .sub, .paper small {
    color: #000;
}

.paper .gauges {
    margin-top: 5px;
}

.paper .gauge {
    height: 112px;
}

.paper .gauge svg {
    width: 124px;
}

.paper .dial {
    stroke: none;
}

.paper .value {
    stroke: #000;
}

.paper .clock-time small {
    font-weight: 700;
}

.error-card {
    padding: 14px 15px;
    display: flex;
    align-items: center;
    gap: 7px;
    font-weight: 700;
}

.error-card svg {
    width: 20px;
    height: 20px;
}

.marker {
    position: absolute;
    top: 222px;
    left: 680px;
    width: 304px;
    height: 34px;
    fill: none;
    stroke: #ff0;
    stroke-width: 10;
    mix-blend-mode: multiply;
    pointer-events: none;
}
```
